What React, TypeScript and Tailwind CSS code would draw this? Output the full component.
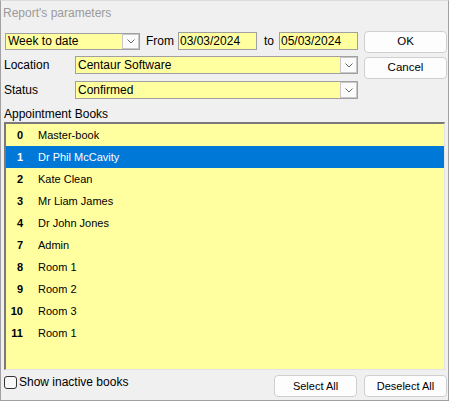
import React from 'react';

// Report parameters dialog
const books = [
  { id: 0, name: 'Master-book' },
  { id: 1, name: 'Dr Phil McCavity' },
  { id: 2, name: 'Kate Clean' },
  { id: 3, name: 'Mr Liam James' },
  { id: 4, name: 'Dr John Jones' },
  { id: 7, name: 'Admin' },
  { id: 8, name: 'Room 1' },
  { id: 9, name: 'Room 2' },
  { id: 10, name: 'Room 3' },
  { id: 11, name: 'Room 1' },
];

function DropButton() {
  return (
    <div className="w-[17px] h-full flex items-center justify-center bg-[#fbfbfb] border border-[#c8c8c8]">
      <svg width="8" height="5" viewBox="0 0 8 5">
        <path d="M0.5 0.5 L4 4 L7.5 0.5" fill="none" stroke="#6a6a6a" strokeWidth="1" />
      </svg>
    </div>
  );
}

function Combo({ value, className }: { value: string; className: string }) {
  return (
    <div className={`flex items-stretch bg-[#ffffa0] border border-[#a0a0a0] ${className}`}>
      <div className="flex-1 flex items-center pl-[2px] text-[12px] text-black">{value}</div>
      <DropButton />
    </div>
  );
}

function DateBox({ value }: { value: string }) {
  return (
    <div className="w-[79px] h-[18px] flex items-center pl-[1px] bg-[#ffffa0] border border-[#a0a0a0] text-[12px] text-black">
      {value}
    </div>
  );
}

function Btn({ label, className = '' }: { label: string; className?: string }) {
  return (
    <button className={`w-[83px] h-[22px] bg-[#fdfdfd] border border-[#cfcfcf] rounded-[4px] text-[11.5px] text-black ${className}`}>
      {label}
    </button>
  );
}

export default function App() {
  return (
    <div
      className="w-[449px] h-[401px] flex flex-col bg-[#f0f0f0] border border-[#a0a0a0] border-t-[#dcdcdc] overflow-hidden"
      style={{ fontFamily: '"Liberation Sans", Arial, sans-serif' }}
    >
      {/* Title */}
      <div className="h-[24px] flex items-center pl-[2px] text-[12px] text-[#9a9a9a]">Report's parameters</div>

      {/* Top parameters */}
      <div className="flex mt-[6px] pl-[3px]">
        <div className="w-[354px] flex flex-col">
          <div className="flex items-center mt-[1px] h-[18px]">
            <Combo value="Week to date" className="w-[135px] h-[17px] ml-[1px]" />
            <span className="w-[38px] pl-[6px] text-[12px] text-black">From</span>
            <DateBox value="03/03/2024" />
            <span className="w-[22px] pl-[7px] text-[12px] text-black">to</span>
            <DateBox value="05/03/2024" />
          </div>
          <div className="flex items-center mt-[6px] h-[18px]">
            <span className="w-[71px] text-[12px] text-black">Location</span>
            <Combo value="Centaur Software" className="flex-1 h-[18px]" />
          </div>
          <div className="flex items-center mt-[7px] h-[18px]">
            <span className="w-[71px] text-[12px] text-black">Status</span>
            <Combo value="Confirmed" className="flex-1 h-[18px]" />
          </div>
        </div>
        <div className="ml-[6px] flex flex-col">
          <Btn label="OK" />
          <Btn label="Cancel" className="mt-[4px]" />
        </div>
      </div>

      {/* Appointment books */}
      <div className="mt-[8px] ml-[3px] h-[15px] leading-[15px] text-[12px] text-black">Appointment Books</div>
      <div className="ml-[3px] w-[441px] h-[248px] bg-[#ffffa0] border-t-2 border-l-2 border-t-[#7a7a7a] border-l-[#7a7a7a] border-b border-r border-b-[#e3e3e3] border-r-[#e3e3e3]">
        {books.map((b) => {
          const sel = b.id === 1;
          return (
            <div
              key={b.id}
              className={`h-[22px] flex items-center text-[11px] ${sel ? 'bg-[#0078d7] text-white' : 'text-black'}`}
            >
              <span className="w-[17px] text-right font-bold">{b.id}</span>
              <span className="ml-[15px]">{b.name}</span>
            </div>
          );
        })}
      </div>

      {/* Bottom bar */}
      <div className="flex mt-[5px] h-[22px]">
        <div className="flex items-start">
          <div className="ml-[3px] mt-[1px] w-[13px] h-[13px] rounded-[3px] border border-[#333333] bg-[#f8f8f8]" />
          <span className="ml-[2px] text-[12px] leading-[15px] text-black">Show inactive books</span>
        </div>
        <div className="ml-auto mr-[1px] flex gap-[7px]">
          <Btn label="Select All" className="text-[11px]" />
          <Btn label="Deselect All" className="text-[11px]" />
        </div>
      </div>
    </div>
  );
}
